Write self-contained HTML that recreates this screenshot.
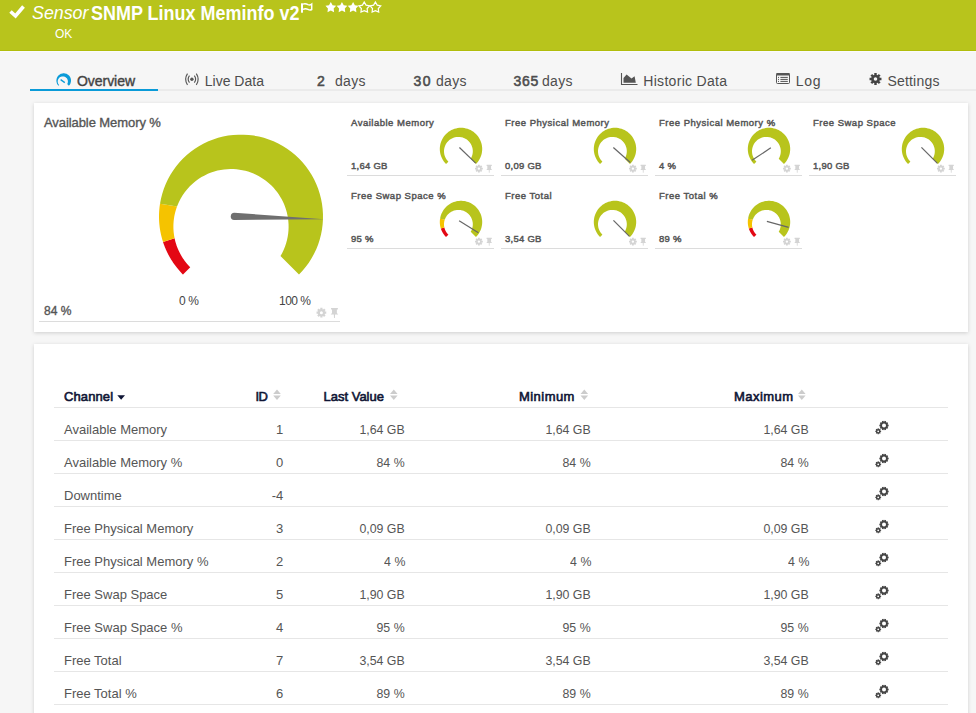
<!DOCTYPE html><html><head><meta charset="utf-8"><style>
html,body{margin:0;padding:0;}
body{width:976px;height:713px;overflow:hidden;position:relative;background:#f6f6f6;font-family:"Liberation Sans", sans-serif;}
.p{position:absolute;background:#fff;box-shadow:0 1px 4px rgba(0,0,0,0.16);}
.ln{position:absolute;height:1px;}
</style></head><body>
<div style="position:absolute;left:0;top:0;width:976px;height:50px;background:#b8c41c"></div>
<div style="position:absolute;left:0;top:50px;width:976px;height:1px;background:#b1bd0c"></div>
<div style="position:absolute;left:0;top:51px;width:976px;height:1px;background:#fafafc"></div>
<svg style="position:absolute;left:0;top:0" width="976" height="52"><path d="M10.5,11.5 L15.5,16 L23.5,6.5" stroke="#fff" stroke-width="3.6" fill="none" stroke-linecap="butt" stroke-linejoin="miter"/><rect x="301" y="3.3" width="2" height="9.4" fill="#fff"/><path d="M303,4.1 Q305.5,3.3 308,4.6 Q310,5.4 311.7,4.1 L311.7,9.5 Q310,10.6 308,9.4 Q305.5,8.2 303,9.4" stroke="#fff" stroke-width="1.5" fill="none"/></svg>
<div style="position:absolute;top:-4.95px;line-height:36px;font-size:18px;font-weight:400;color:#fff;white-space:nowrap;font-style:italic;left:32px;transform:scaleX(0.99);transform-origin:0 0;">Sensor</div>
<div style="position:absolute;top:-6.24px;line-height:39.0px;font-size:19.5px;font-weight:700;color:#fff;white-space:nowrap;left:90.6px;transform:scaleX(0.922);transform-origin:0 0;">SNMP Linux Meminfo v2</div>
<div style="position:absolute;top:22.03px;line-height:24px;font-size:12px;font-weight:400;color:#fff;white-space:nowrap;left:55px;">OK</div>
<svg style="position:absolute;left:0;top:0" width="400" height="20"><polygon points="330.80,2.00 332.58,5.15 336.13,5.87 333.68,8.53 334.09,12.13 330.80,10.62 327.51,12.13 327.92,8.53 325.47,5.87 329.02,5.15" fill="#fff"/><polygon points="341.95,2.00 343.73,5.15 347.28,5.87 344.83,8.53 345.24,12.13 341.95,10.62 338.66,12.13 339.07,8.53 336.62,5.87 340.17,5.15" fill="#fff"/><polygon points="353.10,2.00 354.88,5.15 358.43,5.87 355.98,8.53 356.39,12.13 353.10,10.62 349.81,12.13 350.22,8.53 347.77,5.87 351.32,5.15" fill="#fff"/><polygon points="364.25,2.00 366.03,5.15 369.58,5.87 367.13,8.53 367.54,12.13 364.25,10.62 360.96,12.13 361.37,8.53 358.92,5.87 362.47,5.15" fill="none" stroke="#fff" stroke-width="1.2"/><polygon points="375.40,2.00 377.18,5.15 380.73,5.87 378.28,8.53 378.69,12.13 375.40,10.62 372.11,12.13 372.52,8.53 370.07,5.87 373.62,5.15" fill="none" stroke="#fff" stroke-width="1.2"/></svg>
<div style="position:absolute;left:30px;top:89px;width:946px;height:2px;background:#ebebeb"></div>
<div style="position:absolute;left:30px;top:89px;width:128px;height:2px;background:#0a9bd8"></div>
<div style="position:absolute;top:67.37px;line-height:28px;font-size:14px;font-weight:400;color:#444;white-space:nowrap;letter-spacing:-0.05px;left:77px;-webkit-text-stroke:0.4px #444;">Overview</div>
<div style="position:absolute;top:67.37px;line-height:28px;font-size:14px;font-weight:400;color:#4d4d4d;white-space:nowrap;left:204.8px;">Live Data</div>
<div style="position:absolute;top:67.37px;line-height:28px;font-size:14px;font-weight:400;color:#4d4d4d;white-space:nowrap;left:317px;-webkit-text-stroke:0.55px #4d4d4d;">2</div>
<div style="position:absolute;top:67.37px;line-height:28px;font-size:14px;font-weight:400;color:#4d4d4d;white-space:nowrap;letter-spacing:0.3px;left:335px;">days</div>
<div style="position:absolute;top:67.37px;line-height:28px;font-size:14px;font-weight:400;color:#4d4d4d;white-space:nowrap;letter-spacing:1.4px;left:413.5px;-webkit-text-stroke:0.55px #4d4d4d;">30</div>
<div style="position:absolute;top:67.37px;line-height:28px;font-size:14px;font-weight:400;color:#4d4d4d;white-space:nowrap;letter-spacing:0.3px;left:436px;">days</div>
<div style="position:absolute;top:67.37px;line-height:28px;font-size:14px;font-weight:400;color:#4d4d4d;white-space:nowrap;letter-spacing:0.7px;left:513.5px;-webkit-text-stroke:0.55px #4d4d4d;">365</div>
<div style="position:absolute;top:67.37px;line-height:28px;font-size:14px;font-weight:400;color:#4d4d4d;white-space:nowrap;letter-spacing:0.3px;left:542px;">days</div>
<div style="position:absolute;top:67.37px;line-height:28px;font-size:14px;font-weight:400;color:#4d4d4d;white-space:nowrap;letter-spacing:0.3px;left:643.3px;">Historic Data</div>
<div style="position:absolute;top:67.37px;line-height:28px;font-size:14px;font-weight:400;color:#4d4d4d;white-space:nowrap;letter-spacing:0.7px;left:795.8px;">Log</div>
<div style="position:absolute;top:67.37px;line-height:28px;font-size:14px;font-weight:400;color:#4d4d4d;white-space:nowrap;letter-spacing:0.2px;left:887.4px;">Settings</div>
<svg style="position:absolute;left:0;top:0" width="976" height="100"><path d="M58.54,85.76 L58.15,85.34 L57.79,84.89 L57.48,84.41 L57.20,83.91 L56.96,83.39 L56.76,82.86 L56.60,82.30 L56.49,81.74 L56.42,81.17 L56.40,80.60 L56.42,80.03 L56.49,79.46 L56.60,78.90 L56.76,78.34 L56.96,77.81 L57.20,77.29 L57.48,76.79 L57.79,76.31 L58.15,75.86 L58.54,75.44 L58.96,75.05 L59.41,74.69 L59.89,74.38 L60.39,74.10 L60.91,73.86 L61.44,73.66 L62.00,73.50 L62.56,73.39 L63.13,73.32 L63.70,73.30 L64.27,73.32 L64.84,73.39 L65.40,73.50 L65.96,73.66 L66.49,73.86 L67.01,74.10 L67.51,74.38 L67.99,74.69 L68.44,75.05 L68.86,75.44 L69.25,75.86 L69.61,76.31 L69.92,76.79 L70.20,77.29 L70.44,77.81 L70.64,78.34 L70.80,78.90 L70.91,79.46 L70.98,80.03 L71.00,80.60 L70.98,81.17 L70.91,81.74 L70.80,82.30 L70.64,82.86 L70.44,83.39 L70.20,83.91 L69.92,84.41 L69.61,84.89 L69.25,85.34 L68.86,85.76 L67.19,84.09 L67.38,83.74 L67.54,83.39 L67.67,83.03 L67.76,82.67 L67.83,82.31 L67.88,81.96 L67.90,81.61 L67.89,81.26 L67.87,80.93 L67.82,80.60 L67.75,80.28 L67.67,79.97 L67.56,79.67 L67.44,79.38 L67.30,79.11 L67.15,78.84 L66.99,78.59 L66.81,78.34 L66.61,78.11 L66.41,77.89 L66.19,77.69 L65.96,77.49 L65.71,77.31 L65.46,77.15 L65.19,77.00 L64.92,76.86 L64.63,76.74 L64.33,76.63 L64.02,76.55 L63.70,76.48 L63.37,76.43 L63.04,76.41 L62.69,76.40 L62.34,76.42 L61.99,76.47 L61.63,76.54 L61.27,76.63 L60.91,76.76 L60.56,76.92 L60.21,77.11 L59.87,77.33 L59.54,77.58 L59.23,77.86 L58.94,78.17 L58.67,78.51 L58.42,78.88 L58.21,79.28 L58.03,79.70 L57.88,80.14 L57.78,80.60 L57.72,81.07 L57.70,81.55 L57.73,82.03 L57.80,82.52 L57.92,82.99 L58.09,83.46 L58.30,83.91 L58.56,84.33 L58.86,84.74 L59.19,85.11Z" fill="#0a9bd8"/><line x1="60.6" y1="79.6" x2="64.8" y2="82.6" stroke="#0a9bd8" stroke-width="1.3"/><circle cx="191.9" cy="79.2" r="1.7" fill="#555"/><path d="M189.48,82.72 A5.85,5.85 0 0,1 189.48,75.68 M194.32,75.68 A5.85,5.85 0 0,1 194.32,82.72" stroke="#555" stroke-width="1.15" fill="none"/><path d="M187.50,84.84 A10.2,10.2 0 0,1 187.50,73.56 M196.30,73.56 A10.2,10.2 0 0,1 196.30,84.84" stroke="#555" stroke-width="1.15" fill="none"/><path d="M621.5,73 L621.5,84.5 L637.5,84.5" stroke="#555" stroke-width="1.1" fill="none"/><path d="M623.5,82.8 L623.5,78 L626.6,74.6 L631.5,78.6 L634.6,76.2 L635.8,82.8 Z" fill="#555"/><rect x="776.5" y="73.5" width="13" height="10" rx="1" fill="none" stroke="#555" stroke-width="1"/><rect x="776.5" y="73" width="13" height="2.5" fill="#555"/><rect x="778" y="76.9" width="1" height="1" fill="#555"/><rect x="780.4" y="76.9" width="7.4" height="1" fill="#555"/><rect x="778" y="78.9" width="1" height="1" fill="#555"/><rect x="780.4" y="78.9" width="7.4" height="1" fill="#555"/><rect x="778" y="80.9" width="1" height="1" fill="#555"/><rect x="780.4" y="80.9" width="7.4" height="1" fill="#555"/><path d="M879.57,77.32 L879.75,77.86 L881.47,77.73 L881.47,80.27 L879.75,80.14 L879.57,80.68 L879.31,81.20 L880.62,82.32 L878.82,84.12 L877.70,82.81 L877.18,83.07 L876.64,83.25 L876.77,84.97 L874.23,84.97 L874.36,83.25 L873.82,83.07 L873.30,82.81 L872.18,84.12 L870.38,82.32 L871.69,81.20 L871.43,80.68 L871.25,80.14 L869.53,80.27 L869.53,77.73 L871.25,77.86 L871.43,77.32 L871.69,76.80 L870.38,75.68 L872.18,73.88 L873.30,75.19 L873.82,74.93 L874.36,74.75 L874.23,73.03 L876.77,73.03 L876.64,74.75 L877.18,74.93 L877.70,75.19 L878.82,73.88 L880.62,75.68 L879.31,76.80Z M877.30,79.00 A1.8,1.8 0 1,0 873.70,79.00 A1.8,1.8 0 1,0 877.30,79.00Z" fill="#444" fill-rule="evenodd"/></svg>
<div class="p" style="left:34px;top:103px;width:934px;height:229px"></div>
<div style="position:absolute;top:110.20px;line-height:26px;font-size:13px;font-weight:400;color:#555;white-space:nowrap;letter-spacing:-0.08px;left:44px;-webkit-text-stroke:0.35px #555;">Available Memory %</div>
<div style="position:absolute;top:299.03px;line-height:24px;font-size:12px;font-weight:400;color:#555;white-space:nowrap;left:44px;-webkit-text-stroke:0.35px #555;">84 %</div>
<div style="position:absolute;top:289.03px;line-height:24px;font-size:12px;font-weight:400;color:#444;white-space:nowrap;letter-spacing:-0.4px;left:179px;">0 %</div>
<div style="position:absolute;top:289.03px;line-height:24px;font-size:12px;font-weight:400;color:#444;white-space:nowrap;letter-spacing:-0.5px;left:279px;">100 %</div>
<div class="ln" style="left:39px;top:321px;width:301px;background:#dcdcdc"></div>
<svg style="position:absolute;left:0;top:0" width="976" height="340"><path d="M183.02,274.58 L182.56,274.13 L182.11,273.66 L181.67,273.20 L181.22,272.73 L180.79,272.26 L180.35,271.79 L179.92,271.31 L179.49,270.83 L179.07,270.34 L178.65,269.85 L178.23,269.36 L177.82,268.87 L177.41,268.37 L177.00,267.87 L176.60,267.37 L176.21,266.86 L175.81,266.35 L175.43,265.83 L175.04,265.32 L174.66,264.80 L174.28,264.28 L173.91,263.75 L173.54,263.22 L173.18,262.69 L172.82,262.16 L172.46,261.62 L172.11,261.08 L171.77,260.54 L171.42,259.99 L171.08,259.44 L170.75,258.89 L170.42,258.34 L170.09,257.79 L169.77,257.23 L169.46,256.67 L169.14,256.10 L168.83,255.54 L168.53,254.97 L168.23,254.40 L167.94,253.83 L167.65,253.25 L167.36,252.68 L167.08,252.10 L166.80,251.51 L166.53,250.93 L166.26,250.34 L166.00,249.76 L165.74,249.17 L165.49,248.57 L165.24,247.98 L165.00,247.38 L164.76,246.79 L164.52,246.19 L164.29,245.58 L164.07,244.98 L163.85,244.38 L163.63,243.77 L163.42,243.16 L163.21,242.55 L163.01,241.94 L174.58,238.18 L174.69,238.72 L174.81,239.26 L174.93,239.80 L175.06,240.34 L175.20,240.88 L175.34,241.41 L175.48,241.95 L175.63,242.48 L175.79,243.01 L175.95,243.55 L176.11,244.08 L176.29,244.60 L176.46,245.13 L176.64,245.66 L176.83,246.18 L177.02,246.71 L177.22,247.23 L177.42,247.75 L177.63,248.26 L177.84,248.78 L178.06,249.29 L178.28,249.81 L178.51,250.32 L178.74,250.83 L178.98,251.33 L179.22,251.84 L179.47,252.34 L179.72,252.84 L179.98,253.34 L180.24,253.83 L180.51,254.32 L180.78,254.81 L181.06,255.30 L181.34,255.79 L181.63,256.27 L181.92,256.75 L182.22,257.23 L182.52,257.70 L182.82,258.17 L183.13,258.64 L183.45,259.11 L183.77,259.57 L184.09,260.03 L184.42,260.49 L184.76,260.94 L185.09,261.39 L185.44,261.84 L185.78,262.28 L186.13,262.72 L186.49,263.16 L186.85,263.59 L187.21,264.02 L187.58,264.45 L187.95,264.87 L188.33,265.29 L188.71,265.70 L189.09,266.12 L189.48,266.52 L189.87,266.93 L190.27,267.33Z" fill="#e30814"/><path d="M163.01,241.94 L162.82,241.33 L162.62,240.71 L162.44,240.10 L162.26,239.48 L162.08,238.86 L161.91,238.24 L161.74,237.62 L161.58,236.99 L161.42,236.37 L161.27,235.74 L161.12,235.12 L160.97,234.49 L160.84,233.86 L160.70,233.23 L160.58,232.60 L160.45,231.97 L160.33,231.33 L160.22,230.70 L160.11,230.06 L160.01,229.43 L159.91,228.79 L159.82,228.15 L159.73,227.52 L159.65,226.88 L159.57,226.24 L159.50,225.60 L159.43,224.96 L159.36,224.32 L159.31,223.68 L159.25,223.03 L159.20,222.39 L159.16,221.75 L159.12,221.11 L159.09,220.46 L159.06,219.82 L159.04,219.18 L159.02,218.53 L159.01,217.89 L159.00,217.24 L159.00,216.60 L159.00,215.96 L159.01,215.31 L159.02,214.67 L159.04,214.02 L159.06,213.38 L159.09,212.74 L159.12,212.09 L159.16,211.45 L159.20,210.81 L159.25,210.17 L159.31,209.52 L159.36,208.88 L159.43,208.24 L159.50,207.60 L159.57,206.96 L159.65,206.32 L159.73,205.68 L159.82,205.05 L159.91,204.41 L160.01,203.77 L177.03,206.47 L176.85,206.96 L176.68,207.45 L176.51,207.94 L176.34,208.43 L176.18,208.93 L176.02,209.43 L175.87,209.93 L175.72,210.43 L175.57,210.93 L175.43,211.44 L175.29,211.95 L175.16,212.46 L175.04,212.97 L174.91,213.48 L174.80,214.00 L174.68,214.52 L174.57,215.03 L174.47,215.55 L174.37,216.08 L174.27,216.60 L174.18,217.12 L174.10,217.65 L174.02,218.18 L173.94,218.71 L173.87,219.24 L173.81,219.77 L173.75,220.30 L173.69,220.83 L173.64,221.37 L173.59,221.91 L173.55,222.44 L173.51,222.98 L173.48,223.52 L173.46,224.06 L173.43,224.60 L173.42,225.14 L173.41,225.68 L173.40,226.22 L173.40,226.76 L173.40,227.31 L173.41,227.85 L173.43,228.39 L173.45,228.94 L173.47,229.48 L173.50,230.03 L173.54,230.57 L173.58,231.12 L173.62,231.66 L173.67,232.21 L173.73,232.75 L173.79,233.29 L173.86,233.84 L173.93,234.38 L174.01,234.93 L174.09,235.47 L174.17,236.01 L174.27,236.56 L174.37,237.10 L174.47,237.64 L174.58,238.18Z" fill="#f5c300"/><path d="M160.01,203.77 L160.97,198.71 L162.26,193.72 L163.85,188.82 L165.74,184.03 L167.94,179.37 L170.42,174.86 L173.18,170.51 L176.21,166.34 L179.49,162.37 L183.02,158.62 L186.77,155.09 L190.74,151.81 L194.91,148.78 L199.26,146.02 L203.77,143.54 L208.43,141.34 L213.22,139.45 L218.12,137.86 L223.11,136.57 L228.17,135.61 L233.28,134.96 L238.42,134.64 L243.58,134.64 L248.72,134.96 L253.83,135.61 L258.89,136.57 L263.88,137.86 L268.78,139.45 L273.57,141.34 L278.23,143.54 L282.74,146.02 L287.09,148.78 L291.26,151.81 L295.23,155.09 L298.98,158.62 L302.51,162.37 L305.79,166.34 L308.82,170.51 L311.58,174.86 L314.06,179.37 L316.26,184.03 L318.15,188.82 L319.74,193.72 L321.03,198.71 L321.99,203.77 L322.64,208.88 L322.96,214.02 L322.96,219.18 L322.64,224.32 L321.99,229.43 L321.03,234.49 L319.74,239.48 L318.15,244.38 L316.26,249.17 L314.06,253.83 L311.58,258.34 L308.82,262.69 L305.79,266.86 L302.51,270.83 L298.98,274.58 L280.48,256.08 L282.22,252.94 L283.74,249.75 L285.04,246.53 L286.13,243.29 L287.01,240.04 L287.69,236.80 L288.18,233.58 L288.47,230.39 L288.60,227.24 L288.55,224.13 L288.33,221.07 L287.97,218.08 L287.45,215.14 L286.79,212.27 L285.99,209.47 L285.07,206.75 L284.02,204.10 L282.86,201.53 L281.58,199.04 L280.19,196.63 L278.70,194.31 L277.10,192.07 L275.41,189.91 L273.61,187.85 L271.73,185.87 L269.75,183.99 L267.69,182.19 L265.53,180.50 L263.29,178.90 L260.97,177.41 L258.56,176.02 L256.07,174.74 L253.50,173.58 L250.85,172.53 L248.13,171.61 L245.33,170.81 L242.46,170.15 L239.52,169.63 L236.53,169.27 L233.47,169.05 L230.36,169.00 L227.21,169.13 L224.02,169.42 L220.80,169.91 L217.56,170.59 L214.31,171.47 L211.07,172.56 L207.85,173.86 L204.66,175.38 L201.52,177.12 L198.44,179.08 L195.46,181.27 L192.57,183.69 L189.82,186.33 L187.20,189.19 L184.76,192.26 L182.49,195.54 L180.44,199.01 L178.61,202.65 L177.03,206.47Z" fill="#b8c41c"/><path d="M234.09,219.98 L323.96,219.21 L234.32,212.79 A3.6,3.6 0 0,0 234.09,219.98Z" fill="#6f6f6f"/><path d="M324.82,311.28 L324.94,311.62 L326.27,311.58 L326.27,313.82 L324.94,313.78 L324.82,314.12 L324.67,314.44 L325.64,315.35 L324.05,316.94 L323.14,315.97 L322.82,316.12 L322.48,316.24 L322.52,317.57 L320.28,317.57 L320.32,316.24 L319.98,316.12 L319.66,315.97 L318.75,316.94 L317.16,315.35 L318.13,314.44 L317.98,314.12 L317.86,313.78 L316.53,313.82 L316.53,311.58 L317.86,311.62 L317.98,311.28 L318.13,310.96 L317.16,310.05 L318.75,308.46 L319.66,309.43 L319.98,309.28 L320.32,309.16 L320.28,307.83 L322.52,307.83 L322.48,309.16 L322.82,309.28 L323.14,309.43 L324.05,308.46 L325.64,310.05 L324.67,310.96Z M322.90,312.70 A1.5,1.5 0 1,0 319.90,312.70 A1.5,1.5 0 1,0 322.90,312.70Z" fill="#d4d4d4" fill-rule="evenodd"/><path d="M331.03,308.09 L337.87,308.09 L337.87,309.47 L336.88,309.47 L336.88,312.99 L338.25,314.56 L335.06,314.56 L334.91,317.89 L333.99,317.89 L333.84,314.56 L330.65,314.56 L332.02,312.99 L332.02,309.47 L331.03,309.47Z" fill="#d4d4d4"/><path d="M446.01,163.99 L444.88,162.77 L443.85,161.46 L442.92,160.08 L442.11,158.62 L441.41,157.11 L440.84,155.55 L440.39,153.95 L440.06,152.32 L439.87,150.66 L439.80,149.00 L439.87,147.34 L440.06,145.68 L440.39,144.05 L440.84,142.45 L441.41,140.89 L442.11,139.38 L442.92,137.92 L443.85,136.54 L444.88,135.23 L446.01,134.01 L447.23,132.88 L448.54,131.85 L449.92,130.92 L451.38,130.11 L452.89,129.41 L454.45,128.84 L456.05,128.39 L457.68,128.06 L459.34,127.87 L461.00,127.80 L462.66,127.87 L464.32,128.06 L465.95,128.39 L467.55,128.84 L469.11,129.41 L470.62,130.11 L472.08,130.92 L473.46,131.85 L474.77,132.88 L475.99,134.01 L477.12,135.23 L478.15,136.54 L479.08,137.92 L479.89,139.38 L480.59,140.89 L481.16,142.45 L481.61,144.05 L481.94,145.68 L482.13,147.34 L482.20,149.00 L482.13,150.66 L481.94,152.32 L481.61,153.95 L481.16,155.55 L480.59,157.11 L479.89,158.62 L479.08,160.08 L478.15,161.46 L477.12,162.77 L475.99,163.99 L470.73,158.73 L471.27,157.77 L471.71,156.78 L472.08,155.79 L472.37,154.79 L472.58,153.80 L472.72,152.81 L472.79,151.83 L472.79,150.87 L472.73,149.92 L472.62,149.00 L472.44,148.10 L472.21,147.22 L471.93,146.38 L471.60,145.55 L471.23,144.76 L470.81,144.00 L470.35,143.27 L469.85,142.57 L469.31,141.90 L468.73,141.27 L468.11,140.67 L467.46,140.11 L466.77,139.58 L466.05,139.10 L465.29,138.65 L464.49,138.25 L463.67,137.90 L462.81,137.59 L461.92,137.34 L461.00,137.14 L460.06,137.00 L459.09,136.92 L458.10,136.90 L457.09,136.96 L456.07,137.09 L455.04,137.30 L454.01,137.59 L452.98,137.96 L451.96,138.42 L450.97,138.97 L450.00,139.60 L449.07,140.33 L448.19,141.15 L447.36,142.05 L446.61,143.04 L445.93,144.10 L445.34,145.24 L444.84,146.44 L444.46,147.70 L444.18,149.00 L444.03,150.34 L444.01,151.69 L444.11,153.06 L444.34,154.41 L444.70,155.75 L445.20,157.05 L445.82,158.30 L446.56,159.49 L447.41,160.61 L448.37,161.63Z" fill="#b8c41c"/><line x1="459.42" y1="147.47" x2="475.67" y2="163.17" stroke="#666" stroke-width="1.2"/><path d="M481.63,167.47 L481.73,167.73 L482.80,167.70 L482.80,169.50 L481.73,169.47 L481.63,169.73 L481.51,169.99 L482.29,170.72 L481.02,171.99 L480.29,171.21 L480.03,171.33 L479.77,171.43 L479.80,172.50 L478.00,172.50 L478.03,171.43 L477.77,171.33 L477.51,171.21 L476.78,171.99 L475.51,170.72 L476.29,169.99 L476.17,169.73 L476.07,169.47 L475.00,169.50 L475.00,167.70 L476.07,167.73 L476.17,167.47 L476.29,167.21 L475.51,166.48 L476.78,165.21 L477.51,165.99 L477.77,165.87 L478.03,165.77 L478.00,164.70 L479.80,164.70 L479.77,165.77 L480.03,165.87 L480.29,165.99 L481.02,165.21 L482.29,166.48 L481.51,167.21Z M480.10,168.60 A1.2,1.2 0 1,0 477.70,168.60 A1.2,1.2 0 1,0 480.10,168.60Z" fill="#d4d4d4" fill-rule="evenodd"/><path d="M486.59,164.84 L491.81,164.84 L491.81,165.96 L491.06,165.96 L491.06,168.84 L492.10,170.12 L489.66,170.12 L489.55,172.84 L488.85,172.84 L488.74,170.12 L486.30,170.12 L487.34,168.84 L487.34,165.96 L486.59,165.96Z" fill="#d4d4d4"/><path d="M600.01,163.99 L598.88,162.77 L597.85,161.46 L596.92,160.08 L596.11,158.62 L595.41,157.11 L594.84,155.55 L594.39,153.95 L594.06,152.32 L593.87,150.66 L593.80,149.00 L593.87,147.34 L594.06,145.68 L594.39,144.05 L594.84,142.45 L595.41,140.89 L596.11,139.38 L596.92,137.92 L597.85,136.54 L598.88,135.23 L600.01,134.01 L601.23,132.88 L602.54,131.85 L603.92,130.92 L605.38,130.11 L606.89,129.41 L608.45,128.84 L610.05,128.39 L611.68,128.06 L613.34,127.87 L615.00,127.80 L616.66,127.87 L618.32,128.06 L619.95,128.39 L621.55,128.84 L623.11,129.41 L624.62,130.11 L626.08,130.92 L627.46,131.85 L628.77,132.88 L629.99,134.01 L631.12,135.23 L632.15,136.54 L633.08,137.92 L633.89,139.38 L634.59,140.89 L635.16,142.45 L635.61,144.05 L635.94,145.68 L636.13,147.34 L636.20,149.00 L636.13,150.66 L635.94,152.32 L635.61,153.95 L635.16,155.55 L634.59,157.11 L633.89,158.62 L633.08,160.08 L632.15,161.46 L631.12,162.77 L629.99,163.99 L624.73,158.73 L625.27,157.77 L625.71,156.78 L626.08,155.79 L626.37,154.79 L626.58,153.80 L626.72,152.81 L626.79,151.83 L626.79,150.87 L626.73,149.92 L626.62,149.00 L626.44,148.10 L626.21,147.22 L625.93,146.38 L625.60,145.55 L625.23,144.76 L624.81,144.00 L624.35,143.27 L623.85,142.57 L623.31,141.90 L622.73,141.27 L622.11,140.67 L621.46,140.11 L620.77,139.58 L620.05,139.10 L619.29,138.65 L618.49,138.25 L617.67,137.90 L616.81,137.59 L615.92,137.34 L615.00,137.14 L614.06,137.00 L613.09,136.92 L612.10,136.90 L611.09,136.96 L610.07,137.09 L609.04,137.30 L608.01,137.59 L606.98,137.96 L605.96,138.42 L604.97,138.97 L604.00,139.60 L603.07,140.33 L602.19,141.15 L601.36,142.05 L600.61,143.04 L599.93,144.10 L599.34,145.24 L598.84,146.44 L598.46,147.70 L598.18,149.00 L598.03,150.34 L598.01,151.69 L598.11,153.06 L598.34,154.41 L598.70,155.75 L599.20,157.05 L599.82,158.30 L600.56,159.49 L601.41,160.61 L602.37,161.63Z" fill="#b8c41c"/><line x1="613.35" y1="147.54" x2="630.28" y2="162.52" stroke="#666" stroke-width="1.2"/><path d="M635.63,167.47 L635.73,167.73 L636.80,167.70 L636.80,169.50 L635.73,169.47 L635.63,169.73 L635.51,169.99 L636.29,170.72 L635.02,171.99 L634.29,171.21 L634.03,171.33 L633.77,171.43 L633.80,172.50 L632.00,172.50 L632.03,171.43 L631.77,171.33 L631.51,171.21 L630.78,171.99 L629.51,170.72 L630.29,169.99 L630.17,169.73 L630.07,169.47 L629.00,169.50 L629.00,167.70 L630.07,167.73 L630.17,167.47 L630.29,167.21 L629.51,166.48 L630.78,165.21 L631.51,165.99 L631.77,165.87 L632.03,165.77 L632.00,164.70 L633.80,164.70 L633.77,165.77 L634.03,165.87 L634.29,165.99 L635.02,165.21 L636.29,166.48 L635.51,167.21Z M634.10,168.60 A1.2,1.2 0 1,0 631.70,168.60 A1.2,1.2 0 1,0 634.10,168.60Z" fill="#d4d4d4" fill-rule="evenodd"/><path d="M640.59,164.84 L645.81,164.84 L645.81,165.96 L645.06,165.96 L645.06,168.84 L646.10,170.12 L643.66,170.12 L643.55,172.84 L642.85,172.84 L642.74,170.12 L640.30,170.12 L641.34,168.84 L641.34,165.96 L640.59,165.96Z" fill="#d4d4d4"/><path d="M754.01,163.99 L752.88,162.77 L751.85,161.46 L750.92,160.08 L750.11,158.62 L749.41,157.11 L748.84,155.55 L748.39,153.95 L748.06,152.32 L747.87,150.66 L747.80,149.00 L747.87,147.34 L748.06,145.68 L748.39,144.05 L748.84,142.45 L749.41,140.89 L750.11,139.38 L750.92,137.92 L751.85,136.54 L752.88,135.23 L754.01,134.01 L755.23,132.88 L756.54,131.85 L757.92,130.92 L759.38,130.11 L760.89,129.41 L762.45,128.84 L764.05,128.39 L765.68,128.06 L767.34,127.87 L769.00,127.80 L770.66,127.87 L772.32,128.06 L773.95,128.39 L775.55,128.84 L777.11,129.41 L778.62,130.11 L780.08,130.92 L781.46,131.85 L782.77,132.88 L783.99,134.01 L785.12,135.23 L786.15,136.54 L787.08,137.92 L787.89,139.38 L788.59,140.89 L789.16,142.45 L789.61,144.05 L789.94,145.68 L790.13,147.34 L790.20,149.00 L790.13,150.66 L789.94,152.32 L789.61,153.95 L789.16,155.55 L788.59,157.11 L787.89,158.62 L787.08,160.08 L786.15,161.46 L785.12,162.77 L783.99,163.99 L778.73,158.73 L779.27,157.77 L779.71,156.78 L780.08,155.79 L780.37,154.79 L780.58,153.80 L780.72,152.81 L780.79,151.83 L780.79,150.87 L780.73,149.92 L780.62,149.00 L780.44,148.10 L780.21,147.22 L779.93,146.38 L779.60,145.55 L779.23,144.76 L778.81,144.00 L778.35,143.27 L777.85,142.57 L777.31,141.90 L776.73,141.27 L776.11,140.67 L775.46,140.11 L774.77,139.58 L774.05,139.10 L773.29,138.65 L772.49,138.25 L771.67,137.90 L770.81,137.59 L769.92,137.34 L769.00,137.14 L768.06,137.00 L767.09,136.92 L766.10,136.90 L765.09,136.96 L764.07,137.09 L763.04,137.30 L762.01,137.59 L760.98,137.96 L759.96,138.42 L758.97,138.97 L758.00,139.60 L757.07,140.33 L756.19,141.15 L755.36,142.05 L754.61,143.04 L753.93,144.10 L753.34,145.24 L752.84,146.44 L752.46,147.70 L752.18,149.00 L752.03,150.34 L752.01,151.69 L752.11,153.06 L752.34,154.41 L752.70,155.75 L753.20,157.05 L753.82,158.30 L754.56,159.49 L755.41,160.61 L756.37,161.63Z" fill="#b8c41c"/><line x1="770.83" y1="147.78" x2="752.05" y2="160.35" stroke="#666" stroke-width="1.2"/><path d="M789.63,167.47 L789.73,167.73 L790.80,167.70 L790.80,169.50 L789.73,169.47 L789.63,169.73 L789.51,169.99 L790.29,170.72 L789.02,171.99 L788.29,171.21 L788.03,171.33 L787.77,171.43 L787.80,172.50 L786.00,172.50 L786.03,171.43 L785.77,171.33 L785.51,171.21 L784.78,171.99 L783.51,170.72 L784.29,169.99 L784.17,169.73 L784.07,169.47 L783.00,169.50 L783.00,167.70 L784.07,167.73 L784.17,167.47 L784.29,167.21 L783.51,166.48 L784.78,165.21 L785.51,165.99 L785.77,165.87 L786.03,165.77 L786.00,164.70 L787.80,164.70 L787.77,165.77 L788.03,165.87 L788.29,165.99 L789.02,165.21 L790.29,166.48 L789.51,167.21Z M788.10,168.60 A1.2,1.2 0 1,0 785.70,168.60 A1.2,1.2 0 1,0 788.10,168.60Z" fill="#d4d4d4" fill-rule="evenodd"/><path d="M794.59,164.84 L799.81,164.84 L799.81,165.96 L799.06,165.96 L799.06,168.84 L800.10,170.12 L797.66,170.12 L797.55,172.84 L796.85,172.84 L796.74,170.12 L794.30,170.12 L795.34,168.84 L795.34,165.96 L794.59,165.96Z" fill="#d4d4d4"/><path d="M908.01,163.99 L906.88,162.77 L905.85,161.46 L904.92,160.08 L904.11,158.62 L903.41,157.11 L902.84,155.55 L902.39,153.95 L902.06,152.32 L901.87,150.66 L901.80,149.00 L901.87,147.34 L902.06,145.68 L902.39,144.05 L902.84,142.45 L903.41,140.89 L904.11,139.38 L904.92,137.92 L905.85,136.54 L906.88,135.23 L908.01,134.01 L909.23,132.88 L910.54,131.85 L911.92,130.92 L913.38,130.11 L914.89,129.41 L916.45,128.84 L918.05,128.39 L919.68,128.06 L921.34,127.87 L923.00,127.80 L924.66,127.87 L926.32,128.06 L927.95,128.39 L929.55,128.84 L931.11,129.41 L932.62,130.11 L934.08,130.92 L935.46,131.85 L936.77,132.88 L937.99,134.01 L939.12,135.23 L940.15,136.54 L941.08,137.92 L941.89,139.38 L942.59,140.89 L943.16,142.45 L943.61,144.05 L943.94,145.68 L944.13,147.34 L944.20,149.00 L944.13,150.66 L943.94,152.32 L943.61,153.95 L943.16,155.55 L942.59,157.11 L941.89,158.62 L941.08,160.08 L940.15,161.46 L939.12,162.77 L937.99,163.99 L932.73,158.73 L933.27,157.77 L933.71,156.78 L934.08,155.79 L934.37,154.79 L934.58,153.80 L934.72,152.81 L934.79,151.83 L934.79,150.87 L934.73,149.92 L934.62,149.00 L934.44,148.10 L934.21,147.22 L933.93,146.38 L933.60,145.55 L933.23,144.76 L932.81,144.00 L932.35,143.27 L931.85,142.57 L931.31,141.90 L930.73,141.27 L930.11,140.67 L929.46,140.11 L928.77,139.58 L928.05,139.10 L927.29,138.65 L926.49,138.25 L925.67,137.90 L924.81,137.59 L923.92,137.34 L923.00,137.14 L922.06,137.00 L921.09,136.92 L920.10,136.90 L919.09,136.96 L918.07,137.09 L917.04,137.30 L916.01,137.59 L914.98,137.96 L913.96,138.42 L912.97,138.97 L912.00,139.60 L911.07,140.33 L910.19,141.15 L909.36,142.05 L908.61,143.04 L907.93,144.10 L907.34,145.24 L906.84,146.44 L906.46,147.70 L906.18,149.00 L906.03,150.34 L906.01,151.69 L906.11,153.06 L906.34,154.41 L906.70,155.75 L907.20,157.05 L907.82,158.30 L908.56,159.49 L909.41,160.61 L910.37,161.63Z" fill="#b8c41c"/><line x1="921.44" y1="147.44" x2="937.42" y2="163.42" stroke="#666" stroke-width="1.2"/><path d="M943.63,167.47 L943.73,167.73 L944.80,167.70 L944.80,169.50 L943.73,169.47 L943.63,169.73 L943.51,169.99 L944.29,170.72 L943.02,171.99 L942.29,171.21 L942.03,171.33 L941.77,171.43 L941.80,172.50 L940.00,172.50 L940.03,171.43 L939.77,171.33 L939.51,171.21 L938.78,171.99 L937.51,170.72 L938.29,169.99 L938.17,169.73 L938.07,169.47 L937.00,169.50 L937.00,167.70 L938.07,167.73 L938.17,167.47 L938.29,167.21 L937.51,166.48 L938.78,165.21 L939.51,165.99 L939.77,165.87 L940.03,165.77 L940.00,164.70 L941.80,164.70 L941.77,165.77 L942.03,165.87 L942.29,165.99 L943.02,165.21 L944.29,166.48 L943.51,167.21Z M942.10,168.60 A1.2,1.2 0 1,0 939.70,168.60 A1.2,1.2 0 1,0 942.10,168.60Z" fill="#d4d4d4" fill-rule="evenodd"/><path d="M948.59,164.84 L953.81,164.84 L953.81,165.96 L953.06,165.96 L953.06,168.84 L954.10,170.12 L951.66,170.12 L951.55,172.84 L950.85,172.84 L950.74,170.12 L948.30,170.12 L949.34,168.84 L949.34,165.96 L948.59,165.96Z" fill="#d4d4d4"/><path d="M446.01,236.99 L445.89,236.87 L445.78,236.75 L445.66,236.63 L445.55,236.51 L445.43,236.39 L445.32,236.27 L445.21,236.14 L445.10,236.02 L444.99,235.89 L444.88,235.77 L444.77,235.64 L444.67,235.51 L444.56,235.38 L444.45,235.26 L444.35,235.12 L444.25,234.99 L444.15,234.86 L444.05,234.73 L443.95,234.60 L443.85,234.46 L443.75,234.33 L443.66,234.19 L443.56,234.05 L443.47,233.92 L443.37,233.78 L443.28,233.64 L443.19,233.50 L443.10,233.36 L443.01,233.22 L442.92,233.08 L442.84,232.93 L442.75,232.79 L442.67,232.65 L442.59,232.50 L442.50,232.36 L442.42,232.21 L442.34,232.07 L442.26,231.92 L442.19,231.77 L442.11,231.62 L442.04,231.48 L441.96,231.33 L441.89,231.18 L441.82,231.03 L441.75,230.88 L441.68,230.72 L441.61,230.57 L441.54,230.42 L441.48,230.27 L441.41,230.11 L441.35,229.96 L441.29,229.80 L441.23,229.65 L441.17,229.49 L441.11,229.34 L441.05,229.18 L441.00,229.02 L440.94,228.87 L440.89,228.71 L440.84,228.55 L444.34,227.41 L444.37,227.55 L444.40,227.68 L444.44,227.82 L444.47,227.95 L444.51,228.08 L444.54,228.22 L444.58,228.35 L444.62,228.48 L444.66,228.62 L444.70,228.75 L444.75,228.88 L444.79,229.01 L444.84,229.14 L444.89,229.28 L444.94,229.41 L444.99,229.54 L445.04,229.67 L445.09,229.79 L445.14,229.92 L445.20,230.05 L445.25,230.18 L445.31,230.31 L445.37,230.43 L445.43,230.56 L445.49,230.68 L445.56,230.81 L445.62,230.93 L445.68,231.06 L445.75,231.18 L445.82,231.30 L445.89,231.43 L445.96,231.55 L446.03,231.67 L446.10,231.79 L446.17,231.91 L446.25,232.03 L446.32,232.14 L446.40,232.26 L446.48,232.38 L446.56,232.49 L446.64,232.61 L446.72,232.72 L446.80,232.84 L446.89,232.95 L446.97,233.06 L447.06,233.17 L447.14,233.28 L447.23,233.39 L447.32,233.50 L447.41,233.61 L447.50,233.71 L447.59,233.82 L447.69,233.92 L447.78,234.03 L447.88,234.13 L447.97,234.23 L448.07,234.33 L448.17,234.43 L448.27,234.53 L448.37,234.63Z" fill="#e30814"/><path d="M440.84,228.55 L440.79,228.39 L440.74,228.23 L440.69,228.07 L440.64,227.91 L440.60,227.75 L440.55,227.59 L440.51,227.43 L440.47,227.27 L440.43,227.11 L440.39,226.95 L440.35,226.79 L440.31,226.62 L440.27,226.46 L440.24,226.30 L440.21,226.14 L440.18,225.97 L440.14,225.81 L440.12,225.64 L440.09,225.48 L440.06,225.32 L440.04,225.15 L440.01,224.99 L439.99,224.82 L439.97,224.66 L439.95,224.49 L439.93,224.33 L439.91,224.16 L439.89,224.00 L439.88,223.83 L439.87,223.66 L439.85,223.50 L439.84,223.33 L439.83,223.16 L439.82,223.00 L439.82,222.83 L439.81,222.67 L439.81,222.50 L439.80,222.33 L439.80,222.17 L439.80,222.00 L439.80,221.83 L439.80,221.67 L439.81,221.50 L439.81,221.33 L439.82,221.17 L439.82,221.00 L439.83,220.84 L439.84,220.67 L439.85,220.50 L439.87,220.34 L439.88,220.17 L439.89,220.00 L439.91,219.84 L439.93,219.67 L439.95,219.51 L439.97,219.34 L439.99,219.18 L440.01,219.01 L440.04,218.85 L440.06,218.68 L444.84,219.44 L444.80,219.56 L444.76,219.69 L444.72,219.81 L444.68,219.94 L444.64,220.06 L444.60,220.19 L444.56,220.32 L444.53,220.44 L444.49,220.57 L444.46,220.70 L444.43,220.83 L444.39,220.96 L444.36,221.08 L444.33,221.21 L444.31,221.34 L444.28,221.47 L444.25,221.61 L444.23,221.74 L444.21,221.87 L444.18,222.00 L444.16,222.13 L444.14,222.26 L444.13,222.40 L444.11,222.53 L444.09,222.66 L444.08,222.80 L444.07,222.93 L444.05,223.07 L444.04,223.20 L444.03,223.34 L444.02,223.47 L444.02,223.61 L444.01,223.74 L444.01,223.88 L444.00,224.01 L444.00,224.15 L444.00,224.28 L444.00,224.42 L444.00,224.56 L444.01,224.69 L444.01,224.83 L444.02,224.96 L444.02,225.10 L444.03,225.24 L444.04,225.37 L444.05,225.51 L444.06,225.65 L444.08,225.78 L444.09,225.92 L444.11,226.06 L444.12,226.19 L444.14,226.33 L444.16,226.46 L444.18,226.60 L444.21,226.74 L444.23,226.87 L444.26,227.01 L444.28,227.14 L444.31,227.28 L444.34,227.41Z" fill="#f5c300"/><path d="M440.06,218.68 L440.31,217.38 L440.64,216.09 L441.05,214.82 L441.54,213.58 L442.11,212.38 L442.75,211.21 L443.47,210.08 L444.25,209.01 L445.10,207.98 L446.01,207.01 L446.98,206.10 L448.01,205.25 L449.08,204.47 L450.21,203.75 L451.38,203.11 L452.58,202.54 L453.82,202.05 L455.09,201.64 L456.38,201.31 L457.68,201.06 L459.00,200.89 L460.33,200.81 L461.67,200.81 L463.00,200.89 L464.32,201.06 L465.62,201.31 L466.91,201.64 L468.18,202.05 L469.42,202.54 L470.62,203.11 L471.79,203.75 L472.92,204.47 L473.99,205.25 L475.02,206.10 L475.99,207.01 L476.90,207.98 L477.75,209.01 L478.53,210.08 L479.25,211.21 L479.89,212.38 L480.46,213.58 L480.95,214.82 L481.36,216.09 L481.69,217.38 L481.94,218.68 L482.11,220.00 L482.19,221.33 L482.19,222.67 L482.11,224.00 L481.94,225.32 L481.69,226.62 L481.36,227.91 L480.95,229.18 L480.46,230.42 L479.89,231.62 L479.25,232.79 L478.53,233.92 L477.75,234.99 L476.90,236.02 L475.99,236.99 L470.73,231.73 L471.17,230.96 L471.54,230.18 L471.87,229.39 L472.15,228.59 L472.37,227.79 L472.55,227.00 L472.67,226.20 L472.76,225.42 L472.80,224.64 L472.79,223.87 L472.75,223.11 L472.67,222.37 L472.55,221.64 L472.40,220.92 L472.21,220.22 L471.99,219.54 L471.74,218.88 L471.46,218.23 L471.15,217.61 L470.81,217.00 L470.45,216.41 L470.06,215.85 L469.64,215.30 L469.20,214.77 L468.73,214.27 L468.24,213.79 L467.73,213.33 L467.19,212.89 L466.63,212.48 L466.05,212.10 L465.44,211.74 L464.81,211.41 L464.17,211.10 L463.50,210.83 L462.81,210.59 L462.10,210.38 L461.37,210.21 L460.63,210.07 L459.86,209.97 L459.09,209.92 L458.30,209.90 L457.49,209.93 L456.68,210.00 L455.86,210.13 L455.04,210.30 L454.21,210.52 L453.39,210.80 L452.57,211.13 L451.76,211.52 L450.97,211.97 L450.19,212.47 L449.44,213.03 L448.71,213.65 L448.02,214.32 L447.36,215.05 L446.75,215.83 L446.19,216.67 L445.68,217.55 L445.23,218.48 L444.84,219.44Z" fill="#b8c41c"/><line x1="459.12" y1="220.85" x2="478.39" y2="232.66" stroke="#666" stroke-width="1.2"/><path d="M481.63,240.47 L481.73,240.73 L482.80,240.70 L482.80,242.50 L481.73,242.47 L481.63,242.73 L481.51,242.99 L482.29,243.72 L481.02,244.99 L480.29,244.21 L480.03,244.33 L479.77,244.43 L479.80,245.50 L478.00,245.50 L478.03,244.43 L477.77,244.33 L477.51,244.21 L476.78,244.99 L475.51,243.72 L476.29,242.99 L476.17,242.73 L476.07,242.47 L475.00,242.50 L475.00,240.70 L476.07,240.73 L476.17,240.47 L476.29,240.21 L475.51,239.48 L476.78,238.21 L477.51,238.99 L477.77,238.87 L478.03,238.77 L478.00,237.70 L479.80,237.70 L479.77,238.77 L480.03,238.87 L480.29,238.99 L481.02,238.21 L482.29,239.48 L481.51,240.21Z M480.10,241.60 A1.2,1.2 0 1,0 477.70,241.60 A1.2,1.2 0 1,0 480.10,241.60Z" fill="#d4d4d4" fill-rule="evenodd"/><path d="M486.59,237.84 L491.81,237.84 L491.81,238.96 L491.06,238.96 L491.06,241.84 L492.10,243.12 L489.66,243.12 L489.55,245.84 L488.85,245.84 L488.74,243.12 L486.30,243.12 L487.34,241.84 L487.34,238.96 L486.59,238.96Z" fill="#d4d4d4"/><path d="M600.01,236.99 L598.88,235.77 L597.85,234.46 L596.92,233.08 L596.11,231.62 L595.41,230.11 L594.84,228.55 L594.39,226.95 L594.06,225.32 L593.87,223.66 L593.80,222.00 L593.87,220.34 L594.06,218.68 L594.39,217.05 L594.84,215.45 L595.41,213.89 L596.11,212.38 L596.92,210.92 L597.85,209.54 L598.88,208.23 L600.01,207.01 L601.23,205.88 L602.54,204.85 L603.92,203.92 L605.38,203.11 L606.89,202.41 L608.45,201.84 L610.05,201.39 L611.68,201.06 L613.34,200.87 L615.00,200.80 L616.66,200.87 L618.32,201.06 L619.95,201.39 L621.55,201.84 L623.11,202.41 L624.62,203.11 L626.08,203.92 L627.46,204.85 L628.77,205.88 L629.99,207.01 L631.12,208.23 L632.15,209.54 L633.08,210.92 L633.89,212.38 L634.59,213.89 L635.16,215.45 L635.61,217.05 L635.94,218.68 L636.13,220.34 L636.20,222.00 L636.13,223.66 L635.94,225.32 L635.61,226.95 L635.16,228.55 L634.59,230.11 L633.89,231.62 L633.08,233.08 L632.15,234.46 L631.12,235.77 L629.99,236.99 L624.73,231.73 L625.27,230.77 L625.71,229.78 L626.08,228.79 L626.37,227.79 L626.58,226.80 L626.72,225.81 L626.79,224.83 L626.79,223.87 L626.73,222.92 L626.62,222.00 L626.44,221.10 L626.21,220.22 L625.93,219.38 L625.60,218.55 L625.23,217.76 L624.81,217.00 L624.35,216.27 L623.85,215.57 L623.31,214.90 L622.73,214.27 L622.11,213.67 L621.46,213.11 L620.77,212.58 L620.05,212.10 L619.29,211.65 L618.49,211.25 L617.67,210.90 L616.81,210.59 L615.92,210.34 L615.00,210.14 L614.06,210.00 L613.09,209.92 L612.10,209.90 L611.09,209.96 L610.07,210.09 L609.04,210.30 L608.01,210.59 L606.98,210.96 L605.96,211.42 L604.97,211.97 L604.00,212.60 L603.07,213.33 L602.19,214.15 L601.36,215.05 L600.61,216.04 L599.93,217.10 L599.34,218.24 L598.84,219.44 L598.46,220.70 L598.18,222.00 L598.03,223.34 L598.01,224.69 L598.11,226.06 L598.34,227.41 L598.70,228.75 L599.20,230.05 L599.82,231.30 L600.56,232.49 L601.41,233.61 L602.37,234.63Z" fill="#b8c41c"/><line x1="613.44" y1="220.44" x2="629.42" y2="236.42" stroke="#666" stroke-width="1.2"/><path d="M635.63,240.47 L635.73,240.73 L636.80,240.70 L636.80,242.50 L635.73,242.47 L635.63,242.73 L635.51,242.99 L636.29,243.72 L635.02,244.99 L634.29,244.21 L634.03,244.33 L633.77,244.43 L633.80,245.50 L632.00,245.50 L632.03,244.43 L631.77,244.33 L631.51,244.21 L630.78,244.99 L629.51,243.72 L630.29,242.99 L630.17,242.73 L630.07,242.47 L629.00,242.50 L629.00,240.70 L630.07,240.73 L630.17,240.47 L630.29,240.21 L629.51,239.48 L630.78,238.21 L631.51,238.99 L631.77,238.87 L632.03,238.77 L632.00,237.70 L633.80,237.70 L633.77,238.77 L634.03,238.87 L634.29,238.99 L635.02,238.21 L636.29,239.48 L635.51,240.21Z M634.10,241.60 A1.2,1.2 0 1,0 631.70,241.60 A1.2,1.2 0 1,0 634.10,241.60Z" fill="#d4d4d4" fill-rule="evenodd"/><path d="M640.59,237.84 L645.81,237.84 L645.81,238.96 L645.06,238.96 L645.06,241.84 L646.10,243.12 L643.66,243.12 L643.55,245.84 L642.85,245.84 L642.74,243.12 L640.30,243.12 L641.34,241.84 L641.34,238.96 L640.59,238.96Z" fill="#d4d4d4"/><path d="M754.01,236.99 L753.89,236.87 L753.78,236.75 L753.66,236.63 L753.55,236.51 L753.43,236.39 L753.32,236.27 L753.21,236.14 L753.10,236.02 L752.99,235.89 L752.88,235.77 L752.77,235.64 L752.67,235.51 L752.56,235.38 L752.45,235.26 L752.35,235.12 L752.25,234.99 L752.15,234.86 L752.05,234.73 L751.95,234.60 L751.85,234.46 L751.75,234.33 L751.66,234.19 L751.56,234.05 L751.47,233.92 L751.37,233.78 L751.28,233.64 L751.19,233.50 L751.10,233.36 L751.01,233.22 L750.92,233.08 L750.84,232.93 L750.75,232.79 L750.67,232.65 L750.59,232.50 L750.50,232.36 L750.42,232.21 L750.34,232.07 L750.26,231.92 L750.19,231.77 L750.11,231.62 L750.04,231.48 L749.96,231.33 L749.89,231.18 L749.82,231.03 L749.75,230.88 L749.68,230.72 L749.61,230.57 L749.54,230.42 L749.48,230.27 L749.41,230.11 L749.35,229.96 L749.29,229.80 L749.23,229.65 L749.17,229.49 L749.11,229.34 L749.05,229.18 L749.00,229.02 L748.94,228.87 L748.89,228.71 L748.84,228.55 L752.34,227.41 L752.37,227.55 L752.40,227.68 L752.44,227.82 L752.47,227.95 L752.51,228.08 L752.54,228.22 L752.58,228.35 L752.62,228.48 L752.66,228.62 L752.70,228.75 L752.75,228.88 L752.79,229.01 L752.84,229.14 L752.89,229.28 L752.94,229.41 L752.99,229.54 L753.04,229.67 L753.09,229.79 L753.14,229.92 L753.20,230.05 L753.25,230.18 L753.31,230.31 L753.37,230.43 L753.43,230.56 L753.49,230.68 L753.56,230.81 L753.62,230.93 L753.68,231.06 L753.75,231.18 L753.82,231.30 L753.89,231.43 L753.96,231.55 L754.03,231.67 L754.10,231.79 L754.17,231.91 L754.25,232.03 L754.32,232.14 L754.40,232.26 L754.48,232.38 L754.56,232.49 L754.64,232.61 L754.72,232.72 L754.80,232.84 L754.89,232.95 L754.97,233.06 L755.06,233.17 L755.14,233.28 L755.23,233.39 L755.32,233.50 L755.41,233.61 L755.50,233.71 L755.59,233.82 L755.69,233.92 L755.78,234.03 L755.88,234.13 L755.97,234.23 L756.07,234.33 L756.17,234.43 L756.27,234.53 L756.37,234.63Z" fill="#e30814"/><path d="M748.84,228.55 L748.79,228.39 L748.74,228.23 L748.69,228.07 L748.64,227.91 L748.60,227.75 L748.55,227.59 L748.51,227.43 L748.47,227.27 L748.43,227.11 L748.39,226.95 L748.35,226.79 L748.31,226.62 L748.27,226.46 L748.24,226.30 L748.21,226.14 L748.18,225.97 L748.14,225.81 L748.12,225.64 L748.09,225.48 L748.06,225.32 L748.04,225.15 L748.01,224.99 L747.99,224.82 L747.97,224.66 L747.95,224.49 L747.93,224.33 L747.91,224.16 L747.89,224.00 L747.88,223.83 L747.87,223.66 L747.85,223.50 L747.84,223.33 L747.83,223.16 L747.82,223.00 L747.82,222.83 L747.81,222.67 L747.81,222.50 L747.80,222.33 L747.80,222.17 L747.80,222.00 L747.80,221.83 L747.80,221.67 L747.81,221.50 L747.81,221.33 L747.82,221.17 L747.82,221.00 L747.83,220.84 L747.84,220.67 L747.85,220.50 L747.87,220.34 L747.88,220.17 L747.89,220.00 L747.91,219.84 L747.93,219.67 L747.95,219.51 L747.97,219.34 L747.99,219.18 L748.01,219.01 L748.04,218.85 L748.06,218.68 L752.84,219.44 L752.80,219.56 L752.76,219.69 L752.72,219.81 L752.68,219.94 L752.64,220.06 L752.60,220.19 L752.56,220.32 L752.53,220.44 L752.49,220.57 L752.46,220.70 L752.43,220.83 L752.39,220.96 L752.36,221.08 L752.33,221.21 L752.31,221.34 L752.28,221.47 L752.25,221.61 L752.23,221.74 L752.21,221.87 L752.18,222.00 L752.16,222.13 L752.14,222.26 L752.13,222.40 L752.11,222.53 L752.09,222.66 L752.08,222.80 L752.07,222.93 L752.05,223.07 L752.04,223.20 L752.03,223.34 L752.02,223.47 L752.02,223.61 L752.01,223.74 L752.01,223.88 L752.00,224.01 L752.00,224.15 L752.00,224.28 L752.00,224.42 L752.00,224.56 L752.01,224.69 L752.01,224.83 L752.02,224.96 L752.02,225.10 L752.03,225.24 L752.04,225.37 L752.05,225.51 L752.06,225.65 L752.08,225.78 L752.09,225.92 L752.11,226.06 L752.12,226.19 L752.14,226.33 L752.16,226.46 L752.18,226.60 L752.21,226.74 L752.23,226.87 L752.26,227.01 L752.28,227.14 L752.31,227.28 L752.34,227.41Z" fill="#f5c300"/><path d="M748.06,218.68 L748.31,217.38 L748.64,216.09 L749.05,214.82 L749.54,213.58 L750.11,212.38 L750.75,211.21 L751.47,210.08 L752.25,209.01 L753.10,207.98 L754.01,207.01 L754.98,206.10 L756.01,205.25 L757.08,204.47 L758.21,203.75 L759.38,203.11 L760.58,202.54 L761.82,202.05 L763.09,201.64 L764.38,201.31 L765.68,201.06 L767.00,200.89 L768.33,200.81 L769.67,200.81 L771.00,200.89 L772.32,201.06 L773.62,201.31 L774.91,201.64 L776.18,202.05 L777.42,202.54 L778.62,203.11 L779.79,203.75 L780.92,204.47 L781.99,205.25 L783.02,206.10 L783.99,207.01 L784.90,207.98 L785.75,209.01 L786.53,210.08 L787.25,211.21 L787.89,212.38 L788.46,213.58 L788.95,214.82 L789.36,216.09 L789.69,217.38 L789.94,218.68 L790.11,220.00 L790.19,221.33 L790.19,222.67 L790.11,224.00 L789.94,225.32 L789.69,226.62 L789.36,227.91 L788.95,229.18 L788.46,230.42 L787.89,231.62 L787.25,232.79 L786.53,233.92 L785.75,234.99 L784.90,236.02 L783.99,236.99 L778.73,231.73 L779.17,230.96 L779.54,230.18 L779.87,229.39 L780.15,228.59 L780.37,227.79 L780.55,227.00 L780.67,226.20 L780.76,225.42 L780.80,224.64 L780.79,223.87 L780.75,223.11 L780.67,222.37 L780.55,221.64 L780.40,220.92 L780.21,220.22 L779.99,219.54 L779.74,218.88 L779.46,218.23 L779.15,217.61 L778.81,217.00 L778.45,216.41 L778.06,215.85 L777.64,215.30 L777.20,214.77 L776.73,214.27 L776.24,213.79 L775.73,213.33 L775.19,212.89 L774.63,212.48 L774.05,212.10 L773.44,211.74 L772.81,211.41 L772.17,211.10 L771.50,210.83 L770.81,210.59 L770.10,210.38 L769.37,210.21 L768.63,210.07 L767.86,209.97 L767.09,209.92 L766.30,209.90 L765.49,209.93 L764.68,210.00 L763.86,210.13 L763.04,210.30 L762.21,210.52 L761.39,210.80 L760.57,211.13 L759.76,211.52 L758.97,211.97 L758.19,212.47 L757.44,213.03 L756.71,213.65 L756.02,214.32 L755.36,215.05 L754.75,215.83 L754.19,216.67 L753.68,217.55 L753.23,218.48 L752.84,219.44Z" fill="#b8c41c"/><line x1="766.88" y1="221.42" x2="788.68" y2="227.38" stroke="#666" stroke-width="1.2"/><path d="M789.63,240.47 L789.73,240.73 L790.80,240.70 L790.80,242.50 L789.73,242.47 L789.63,242.73 L789.51,242.99 L790.29,243.72 L789.02,244.99 L788.29,244.21 L788.03,244.33 L787.77,244.43 L787.80,245.50 L786.00,245.50 L786.03,244.43 L785.77,244.33 L785.51,244.21 L784.78,244.99 L783.51,243.72 L784.29,242.99 L784.17,242.73 L784.07,242.47 L783.00,242.50 L783.00,240.70 L784.07,240.73 L784.17,240.47 L784.29,240.21 L783.51,239.48 L784.78,238.21 L785.51,238.99 L785.77,238.87 L786.03,238.77 L786.00,237.70 L787.80,237.70 L787.77,238.77 L788.03,238.87 L788.29,238.99 L789.02,238.21 L790.29,239.48 L789.51,240.21Z M788.10,241.60 A1.2,1.2 0 1,0 785.70,241.60 A1.2,1.2 0 1,0 788.10,241.60Z" fill="#d4d4d4" fill-rule="evenodd"/><path d="M794.59,237.84 L799.81,237.84 L799.81,238.96 L799.06,238.96 L799.06,241.84 L800.10,243.12 L797.66,243.12 L797.55,245.84 L796.85,245.84 L796.74,243.12 L794.30,243.12 L795.34,241.84 L795.34,238.96 L794.59,238.96Z" fill="#d4d4d4"/></svg>
<div style="position:absolute;top:113.36px;line-height:19.0px;font-size:9.5px;font-weight:400;color:#555;white-space:nowrap;letter-spacing:0.5px;left:351px;-webkit-text-stroke:0.45px #555;">Available Memory</div>
<div style="position:absolute;top:156.36px;line-height:19.0px;font-size:9.5px;font-weight:400;color:#555;white-space:nowrap;letter-spacing:0.25px;left:351px;-webkit-text-stroke:0.45px #555;">1,64 GB</div>
<div class="ln" style="left:347px;top:175px;width:147px;background:#dcdcdc"></div>
<div style="position:absolute;top:113.36px;line-height:19.0px;font-size:9.5px;font-weight:400;color:#555;white-space:nowrap;letter-spacing:0.5px;left:505px;-webkit-text-stroke:0.45px #555;">Free Physical Memory</div>
<div style="position:absolute;top:156.36px;line-height:19.0px;font-size:9.5px;font-weight:400;color:#555;white-space:nowrap;letter-spacing:0.25px;left:505px;-webkit-text-stroke:0.45px #555;">0,09 GB</div>
<div class="ln" style="left:501px;top:175px;width:147px;background:#dcdcdc"></div>
<div style="position:absolute;top:113.36px;line-height:19.0px;font-size:9.5px;font-weight:400;color:#555;white-space:nowrap;letter-spacing:0.5px;left:659px;-webkit-text-stroke:0.45px #555;">Free Physical Memory %</div>
<div style="position:absolute;top:156.36px;line-height:19.0px;font-size:9.5px;font-weight:400;color:#555;white-space:nowrap;letter-spacing:0.25px;left:659px;-webkit-text-stroke:0.45px #555;">4 %</div>
<div class="ln" style="left:655px;top:175px;width:147px;background:#dcdcdc"></div>
<div style="position:absolute;top:113.36px;line-height:19.0px;font-size:9.5px;font-weight:400;color:#555;white-space:nowrap;letter-spacing:0.5px;left:813px;-webkit-text-stroke:0.45px #555;">Free Swap Space</div>
<div style="position:absolute;top:156.36px;line-height:19.0px;font-size:9.5px;font-weight:400;color:#555;white-space:nowrap;letter-spacing:0.25px;left:813px;-webkit-text-stroke:0.45px #555;">1,90 GB</div>
<div class="ln" style="left:809px;top:175px;width:147px;background:#dcdcdc"></div>
<div style="position:absolute;top:186.36px;line-height:19.0px;font-size:9.5px;font-weight:400;color:#555;white-space:nowrap;letter-spacing:0.5px;left:351px;-webkit-text-stroke:0.45px #555;">Free Swap Space %</div>
<div style="position:absolute;top:229.36px;line-height:19.0px;font-size:9.5px;font-weight:400;color:#555;white-space:nowrap;letter-spacing:0.25px;left:351px;-webkit-text-stroke:0.45px #555;">95 %</div>
<div class="ln" style="left:347px;top:248px;width:147px;background:#dcdcdc"></div>
<div style="position:absolute;top:186.36px;line-height:19.0px;font-size:9.5px;font-weight:400;color:#555;white-space:nowrap;letter-spacing:0.5px;left:505px;-webkit-text-stroke:0.45px #555;">Free Total</div>
<div style="position:absolute;top:229.36px;line-height:19.0px;font-size:9.5px;font-weight:400;color:#555;white-space:nowrap;letter-spacing:0.25px;left:505px;-webkit-text-stroke:0.45px #555;">3,54 GB</div>
<div class="ln" style="left:501px;top:248px;width:147px;background:#dcdcdc"></div>
<div style="position:absolute;top:186.36px;line-height:19.0px;font-size:9.5px;font-weight:400;color:#555;white-space:nowrap;letter-spacing:0.5px;left:659px;-webkit-text-stroke:0.45px #555;">Free Total %</div>
<div style="position:absolute;top:229.36px;line-height:19.0px;font-size:9.5px;font-weight:400;color:#555;white-space:nowrap;letter-spacing:0.25px;left:659px;-webkit-text-stroke:0.45px #555;">89 %</div>
<div class="ln" style="left:655px;top:248px;width:147px;background:#dcdcdc"></div>
<div class="p" style="left:34px;top:344px;width:934px;height:400px"></div>
<div style="position:absolute;top:383.70px;line-height:26px;font-size:13px;font-weight:400;color:#0f1535;white-space:nowrap;letter-spacing:0.1px;left:64px;-webkit-text-stroke:0.6px #0f1535;">Channel</div>
<div style="position:absolute;top:383.70px;line-height:26px;font-size:13px;font-weight:400;color:#0f1535;white-space:nowrap;letter-spacing:-0.5px;left:255.5px;-webkit-text-stroke:0.6px #0f1535;">ID</div>
<div style="position:absolute;top:383.70px;line-height:26px;font-size:13px;font-weight:400;color:#0f1535;white-space:nowrap;left:323.5px;-webkit-text-stroke:0.6px #0f1535;">Last Value</div>
<div style="position:absolute;top:383.70px;line-height:26px;font-size:13px;font-weight:400;color:#0f1535;white-space:nowrap;letter-spacing:0.45px;left:519px;-webkit-text-stroke:0.6px #0f1535;">Minimum</div>
<div style="position:absolute;top:383.70px;line-height:26px;font-size:13px;font-weight:400;color:#0f1535;white-space:nowrap;letter-spacing:0.45px;left:734px;-webkit-text-stroke:0.6px #0f1535;">Maximum</div>
<div class="ln" style="left:54px;top:407px;width:894px;background:#e6e6e6"></div>
<div style="position:absolute;top:416.70px;line-height:26px;font-size:13px;font-weight:400;color:#555;white-space:nowrap;left:64px;">Available Memory</div>
<div style="position:absolute;top:416.70px;line-height:26px;font-size:13px;font-weight:400;color:#555;white-space:nowrap;right:692.7px;text-align:right;">1</div>
<div style="position:absolute;top:416.70px;line-height:26px;font-size:13px;font-weight:400;color:#555;white-space:nowrap;right:571px;text-align:right;transform:scaleX(0.95);transform-origin:100% 0;">1,64 GB</div>
<div style="position:absolute;top:416.70px;line-height:26px;font-size:13px;font-weight:400;color:#555;white-space:nowrap;right:385px;text-align:right;transform:scaleX(0.95);transform-origin:100% 0;">1,64 GB</div>
<div style="position:absolute;top:416.70px;line-height:26px;font-size:13px;font-weight:400;color:#555;white-space:nowrap;right:167px;text-align:right;transform:scaleX(0.95);transform-origin:100% 0;">1,64 GB</div>
<div class="ln" style="left:54px;top:440px;width:894px;background:#e6e6e6"></div>
<div style="position:absolute;top:449.70px;line-height:26px;font-size:13px;font-weight:400;color:#555;white-space:nowrap;left:64px;">Available Memory %</div>
<div style="position:absolute;top:449.70px;line-height:26px;font-size:13px;font-weight:400;color:#555;white-space:nowrap;right:692.7px;text-align:right;">0</div>
<div style="position:absolute;top:449.70px;line-height:26px;font-size:13px;font-weight:400;color:#555;white-space:nowrap;right:571px;text-align:right;transform:scaleX(0.95);transform-origin:100% 0;">84 %</div>
<div style="position:absolute;top:449.70px;line-height:26px;font-size:13px;font-weight:400;color:#555;white-space:nowrap;right:385px;text-align:right;transform:scaleX(0.95);transform-origin:100% 0;">84 %</div>
<div style="position:absolute;top:449.70px;line-height:26px;font-size:13px;font-weight:400;color:#555;white-space:nowrap;right:167px;text-align:right;transform:scaleX(0.95);transform-origin:100% 0;">84 %</div>
<div class="ln" style="left:54px;top:473px;width:894px;background:#e6e6e6"></div>
<div style="position:absolute;top:482.70px;line-height:26px;font-size:13px;font-weight:400;color:#555;white-space:nowrap;left:64px;">Downtime</div>
<div style="position:absolute;top:482.70px;line-height:26px;font-size:13px;font-weight:400;color:#555;white-space:nowrap;right:692.7px;text-align:right;">-4</div>
<div class="ln" style="left:54px;top:506px;width:894px;background:#e6e6e6"></div>
<div style="position:absolute;top:515.70px;line-height:26px;font-size:13px;font-weight:400;color:#555;white-space:nowrap;left:64px;">Free Physical Memory</div>
<div style="position:absolute;top:515.70px;line-height:26px;font-size:13px;font-weight:400;color:#555;white-space:nowrap;right:692.7px;text-align:right;">3</div>
<div style="position:absolute;top:515.70px;line-height:26px;font-size:13px;font-weight:400;color:#555;white-space:nowrap;right:571px;text-align:right;transform:scaleX(0.95);transform-origin:100% 0;">0,09 GB</div>
<div style="position:absolute;top:515.70px;line-height:26px;font-size:13px;font-weight:400;color:#555;white-space:nowrap;right:385px;text-align:right;transform:scaleX(0.95);transform-origin:100% 0;">0,09 GB</div>
<div style="position:absolute;top:515.70px;line-height:26px;font-size:13px;font-weight:400;color:#555;white-space:nowrap;right:167px;text-align:right;transform:scaleX(0.95);transform-origin:100% 0;">0,09 GB</div>
<div class="ln" style="left:54px;top:539px;width:894px;background:#e6e6e6"></div>
<div style="position:absolute;top:548.70px;line-height:26px;font-size:13px;font-weight:400;color:#555;white-space:nowrap;left:64px;">Free Physical Memory %</div>
<div style="position:absolute;top:548.70px;line-height:26px;font-size:13px;font-weight:400;color:#555;white-space:nowrap;right:692.7px;text-align:right;">2</div>
<div style="position:absolute;top:548.70px;line-height:26px;font-size:13px;font-weight:400;color:#555;white-space:nowrap;right:571px;text-align:right;transform:scaleX(0.95);transform-origin:100% 0;">4 %</div>
<div style="position:absolute;top:548.70px;line-height:26px;font-size:13px;font-weight:400;color:#555;white-space:nowrap;right:385px;text-align:right;transform:scaleX(0.95);transform-origin:100% 0;">4 %</div>
<div style="position:absolute;top:548.70px;line-height:26px;font-size:13px;font-weight:400;color:#555;white-space:nowrap;right:167px;text-align:right;transform:scaleX(0.95);transform-origin:100% 0;">4 %</div>
<div class="ln" style="left:54px;top:572px;width:894px;background:#e6e6e6"></div>
<div style="position:absolute;top:581.70px;line-height:26px;font-size:13px;font-weight:400;color:#555;white-space:nowrap;left:64px;">Free Swap Space</div>
<div style="position:absolute;top:581.70px;line-height:26px;font-size:13px;font-weight:400;color:#555;white-space:nowrap;right:692.7px;text-align:right;">5</div>
<div style="position:absolute;top:581.70px;line-height:26px;font-size:13px;font-weight:400;color:#555;white-space:nowrap;right:571px;text-align:right;transform:scaleX(0.95);transform-origin:100% 0;">1,90 GB</div>
<div style="position:absolute;top:581.70px;line-height:26px;font-size:13px;font-weight:400;color:#555;white-space:nowrap;right:385px;text-align:right;transform:scaleX(0.95);transform-origin:100% 0;">1,90 GB</div>
<div style="position:absolute;top:581.70px;line-height:26px;font-size:13px;font-weight:400;color:#555;white-space:nowrap;right:167px;text-align:right;transform:scaleX(0.95);transform-origin:100% 0;">1,90 GB</div>
<div class="ln" style="left:54px;top:605px;width:894px;background:#e6e6e6"></div>
<div style="position:absolute;top:614.70px;line-height:26px;font-size:13px;font-weight:400;color:#555;white-space:nowrap;left:64px;">Free Swap Space %</div>
<div style="position:absolute;top:614.70px;line-height:26px;font-size:13px;font-weight:400;color:#555;white-space:nowrap;right:692.7px;text-align:right;">4</div>
<div style="position:absolute;top:614.70px;line-height:26px;font-size:13px;font-weight:400;color:#555;white-space:nowrap;right:571px;text-align:right;transform:scaleX(0.95);transform-origin:100% 0;">95 %</div>
<div style="position:absolute;top:614.70px;line-height:26px;font-size:13px;font-weight:400;color:#555;white-space:nowrap;right:385px;text-align:right;transform:scaleX(0.95);transform-origin:100% 0;">95 %</div>
<div style="position:absolute;top:614.70px;line-height:26px;font-size:13px;font-weight:400;color:#555;white-space:nowrap;right:167px;text-align:right;transform:scaleX(0.95);transform-origin:100% 0;">95 %</div>
<div class="ln" style="left:54px;top:638px;width:894px;background:#e6e6e6"></div>
<div style="position:absolute;top:647.70px;line-height:26px;font-size:13px;font-weight:400;color:#555;white-space:nowrap;left:64px;">Free Total</div>
<div style="position:absolute;top:647.70px;line-height:26px;font-size:13px;font-weight:400;color:#555;white-space:nowrap;right:692.7px;text-align:right;">7</div>
<div style="position:absolute;top:647.70px;line-height:26px;font-size:13px;font-weight:400;color:#555;white-space:nowrap;right:571px;text-align:right;transform:scaleX(0.95);transform-origin:100% 0;">3,54 GB</div>
<div style="position:absolute;top:647.70px;line-height:26px;font-size:13px;font-weight:400;color:#555;white-space:nowrap;right:385px;text-align:right;transform:scaleX(0.95);transform-origin:100% 0;">3,54 GB</div>
<div style="position:absolute;top:647.70px;line-height:26px;font-size:13px;font-weight:400;color:#555;white-space:nowrap;right:167px;text-align:right;transform:scaleX(0.95);transform-origin:100% 0;">3,54 GB</div>
<div class="ln" style="left:54px;top:671px;width:894px;background:#e6e6e6"></div>
<div style="position:absolute;top:680.70px;line-height:26px;font-size:13px;font-weight:400;color:#555;white-space:nowrap;left:64px;">Free Total %</div>
<div style="position:absolute;top:680.70px;line-height:26px;font-size:13px;font-weight:400;color:#555;white-space:nowrap;right:692.7px;text-align:right;">6</div>
<div style="position:absolute;top:680.70px;line-height:26px;font-size:13px;font-weight:400;color:#555;white-space:nowrap;right:571px;text-align:right;transform:scaleX(0.95);transform-origin:100% 0;">89 %</div>
<div style="position:absolute;top:680.70px;line-height:26px;font-size:13px;font-weight:400;color:#555;white-space:nowrap;right:385px;text-align:right;transform:scaleX(0.95);transform-origin:100% 0;">89 %</div>
<div style="position:absolute;top:680.70px;line-height:26px;font-size:13px;font-weight:400;color:#555;white-space:nowrap;right:167px;text-align:right;transform:scaleX(0.95);transform-origin:100% 0;">89 %</div>
<div class="ln" style="left:54px;top:704px;width:894px;background:#e6e6e6"></div>
<svg style="position:absolute;left:0;top:0" width="976" height="713"><path d="M117.3,395.3 L125,395.3 L121.15,399.7Z" fill="#0f1535"/><path d="M273.2,393.9 L277.0,389.4 L280.8,393.9Z" fill="#ccc"/><path d="M273.2,395.4 L277.0,399.9 L280.8,395.4Z" fill="#ccc"/><path d="M390,393.9 L393.8,389.4 L397.6,393.9Z" fill="#ccc"/><path d="M390,395.4 L393.8,399.9 L397.6,395.4Z" fill="#ccc"/><path d="M580.5,393.9 L584.3,389.4 L588.1,393.9Z" fill="#ccc"/><path d="M580.5,395.4 L584.3,399.9 L588.1,395.4Z" fill="#ccc"/><path d="M798,393.9 L801.8,389.4 L805.6,393.9Z" fill="#ccc"/><path d="M798,395.4 L801.8,399.9 L805.6,395.4Z" fill="#ccc"/><path d="M887.71,424.29 L887.80,424.62 L888.65,424.85 L888.65,426.15 L887.80,426.38 L887.71,426.71 L887.59,427.02 L888.15,427.71 L887.38,428.76 L886.56,428.44 L886.29,428.66 L886.01,428.84 L886.06,429.72 L884.82,430.13 L884.34,429.39 L884.00,429.40 L883.66,429.39 L883.18,430.13 L881.94,429.72 L881.99,428.84 L881.71,428.66 L881.44,428.44 L880.62,428.76 L879.85,427.71 L880.41,427.02 L880.29,426.71 L880.20,426.38 L879.35,426.15 L879.35,424.85 L880.20,424.62 L880.29,424.29 L880.41,423.98 L879.85,423.29 L880.62,422.24 L881.44,422.56 L881.71,422.34 L881.99,422.16 L881.94,421.28 L883.18,420.87 L883.66,421.61 L884.00,421.60 L884.34,421.61 L884.82,420.87 L886.06,421.28 L886.01,422.16 L886.29,422.34 L886.56,422.56 L887.38,422.24 L888.15,423.29 L887.59,423.98Z M886.00,425.50 A2.0,2.0 0 1,0 882.00,425.50 A2.0,2.0 0 1,0 886.00,425.50Z" fill="#444" fill-rule="evenodd"/><path d="M880.32,430.42 L880.41,430.67 L881.15,430.78 L881.15,431.82 L880.41,431.93 L880.32,432.18 L880.21,432.42 L880.66,433.02 L879.92,433.76 L879.32,433.31 L879.08,433.42 L878.83,433.51 L878.72,434.25 L877.68,434.25 L877.57,433.51 L877.32,433.42 L877.08,433.31 L876.48,433.76 L875.74,433.02 L876.19,432.42 L876.08,432.18 L875.99,431.93 L875.25,431.82 L875.25,430.78 L875.99,430.67 L876.08,430.42 L876.19,430.18 L875.74,429.58 L876.48,428.84 L877.08,429.29 L877.32,429.18 L877.57,429.09 L877.68,428.35 L878.72,428.35 L878.83,429.09 L879.08,429.18 L879.32,429.29 L879.92,428.84 L880.66,429.58 L880.21,430.18Z M879.10,431.30 A0.9,0.9 0 1,0 877.30,431.30 A0.9,0.9 0 1,0 879.10,431.30Z" fill="#444" fill-rule="evenodd"/><path d="M887.71,457.29 L887.80,457.62 L888.65,457.85 L888.65,459.15 L887.80,459.38 L887.71,459.71 L887.59,460.02 L888.15,460.71 L887.38,461.76 L886.56,461.44 L886.29,461.66 L886.01,461.84 L886.06,462.72 L884.82,463.13 L884.34,462.39 L884.00,462.40 L883.66,462.39 L883.18,463.13 L881.94,462.72 L881.99,461.84 L881.71,461.66 L881.44,461.44 L880.62,461.76 L879.85,460.71 L880.41,460.02 L880.29,459.71 L880.20,459.38 L879.35,459.15 L879.35,457.85 L880.20,457.62 L880.29,457.29 L880.41,456.98 L879.85,456.29 L880.62,455.24 L881.44,455.56 L881.71,455.34 L881.99,455.16 L881.94,454.28 L883.18,453.87 L883.66,454.61 L884.00,454.60 L884.34,454.61 L884.82,453.87 L886.06,454.28 L886.01,455.16 L886.29,455.34 L886.56,455.56 L887.38,455.24 L888.15,456.29 L887.59,456.98Z M886.00,458.50 A2.0,2.0 0 1,0 882.00,458.50 A2.0,2.0 0 1,0 886.00,458.50Z" fill="#444" fill-rule="evenodd"/><path d="M880.32,463.42 L880.41,463.67 L881.15,463.78 L881.15,464.82 L880.41,464.93 L880.32,465.18 L880.21,465.42 L880.66,466.02 L879.92,466.76 L879.32,466.31 L879.08,466.42 L878.83,466.51 L878.72,467.25 L877.68,467.25 L877.57,466.51 L877.32,466.42 L877.08,466.31 L876.48,466.76 L875.74,466.02 L876.19,465.42 L876.08,465.18 L875.99,464.93 L875.25,464.82 L875.25,463.78 L875.99,463.67 L876.08,463.42 L876.19,463.18 L875.74,462.58 L876.48,461.84 L877.08,462.29 L877.32,462.18 L877.57,462.09 L877.68,461.35 L878.72,461.35 L878.83,462.09 L879.08,462.18 L879.32,462.29 L879.92,461.84 L880.66,462.58 L880.21,463.18Z M879.10,464.30 A0.9,0.9 0 1,0 877.30,464.30 A0.9,0.9 0 1,0 879.10,464.30Z" fill="#444" fill-rule="evenodd"/><path d="M887.71,490.29 L887.80,490.62 L888.65,490.85 L888.65,492.15 L887.80,492.38 L887.71,492.71 L887.59,493.02 L888.15,493.71 L887.38,494.76 L886.56,494.44 L886.29,494.66 L886.01,494.84 L886.06,495.72 L884.82,496.13 L884.34,495.39 L884.00,495.40 L883.66,495.39 L883.18,496.13 L881.94,495.72 L881.99,494.84 L881.71,494.66 L881.44,494.44 L880.62,494.76 L879.85,493.71 L880.41,493.02 L880.29,492.71 L880.20,492.38 L879.35,492.15 L879.35,490.85 L880.20,490.62 L880.29,490.29 L880.41,489.98 L879.85,489.29 L880.62,488.24 L881.44,488.56 L881.71,488.34 L881.99,488.16 L881.94,487.28 L883.18,486.87 L883.66,487.61 L884.00,487.60 L884.34,487.61 L884.82,486.87 L886.06,487.28 L886.01,488.16 L886.29,488.34 L886.56,488.56 L887.38,488.24 L888.15,489.29 L887.59,489.98Z M886.00,491.50 A2.0,2.0 0 1,0 882.00,491.50 A2.0,2.0 0 1,0 886.00,491.50Z" fill="#444" fill-rule="evenodd"/><path d="M880.32,496.42 L880.41,496.67 L881.15,496.78 L881.15,497.82 L880.41,497.93 L880.32,498.18 L880.21,498.42 L880.66,499.02 L879.92,499.76 L879.32,499.31 L879.08,499.42 L878.83,499.51 L878.72,500.25 L877.68,500.25 L877.57,499.51 L877.32,499.42 L877.08,499.31 L876.48,499.76 L875.74,499.02 L876.19,498.42 L876.08,498.18 L875.99,497.93 L875.25,497.82 L875.25,496.78 L875.99,496.67 L876.08,496.42 L876.19,496.18 L875.74,495.58 L876.48,494.84 L877.08,495.29 L877.32,495.18 L877.57,495.09 L877.68,494.35 L878.72,494.35 L878.83,495.09 L879.08,495.18 L879.32,495.29 L879.92,494.84 L880.66,495.58 L880.21,496.18Z M879.10,497.30 A0.9,0.9 0 1,0 877.30,497.30 A0.9,0.9 0 1,0 879.10,497.30Z" fill="#444" fill-rule="evenodd"/><path d="M887.71,523.29 L887.80,523.62 L888.65,523.85 L888.65,525.15 L887.80,525.38 L887.71,525.71 L887.59,526.02 L888.15,526.71 L887.38,527.76 L886.56,527.44 L886.29,527.66 L886.01,527.84 L886.06,528.72 L884.82,529.13 L884.34,528.39 L884.00,528.40 L883.66,528.39 L883.18,529.13 L881.94,528.72 L881.99,527.84 L881.71,527.66 L881.44,527.44 L880.62,527.76 L879.85,526.71 L880.41,526.02 L880.29,525.71 L880.20,525.38 L879.35,525.15 L879.35,523.85 L880.20,523.62 L880.29,523.29 L880.41,522.98 L879.85,522.29 L880.62,521.24 L881.44,521.56 L881.71,521.34 L881.99,521.16 L881.94,520.28 L883.18,519.87 L883.66,520.61 L884.00,520.60 L884.34,520.61 L884.82,519.87 L886.06,520.28 L886.01,521.16 L886.29,521.34 L886.56,521.56 L887.38,521.24 L888.15,522.29 L887.59,522.98Z M886.00,524.50 A2.0,2.0 0 1,0 882.00,524.50 A2.0,2.0 0 1,0 886.00,524.50Z" fill="#444" fill-rule="evenodd"/><path d="M880.32,529.42 L880.41,529.67 L881.15,529.78 L881.15,530.82 L880.41,530.93 L880.32,531.18 L880.21,531.42 L880.66,532.02 L879.92,532.76 L879.32,532.31 L879.08,532.42 L878.83,532.51 L878.72,533.25 L877.68,533.25 L877.57,532.51 L877.32,532.42 L877.08,532.31 L876.48,532.76 L875.74,532.02 L876.19,531.42 L876.08,531.18 L875.99,530.93 L875.25,530.82 L875.25,529.78 L875.99,529.67 L876.08,529.42 L876.19,529.18 L875.74,528.58 L876.48,527.84 L877.08,528.29 L877.32,528.18 L877.57,528.09 L877.68,527.35 L878.72,527.35 L878.83,528.09 L879.08,528.18 L879.32,528.29 L879.92,527.84 L880.66,528.58 L880.21,529.18Z M879.10,530.30 A0.9,0.9 0 1,0 877.30,530.30 A0.9,0.9 0 1,0 879.10,530.30Z" fill="#444" fill-rule="evenodd"/><path d="M887.71,556.29 L887.80,556.62 L888.65,556.85 L888.65,558.15 L887.80,558.38 L887.71,558.71 L887.59,559.02 L888.15,559.71 L887.38,560.76 L886.56,560.44 L886.29,560.66 L886.01,560.84 L886.06,561.72 L884.82,562.13 L884.34,561.39 L884.00,561.40 L883.66,561.39 L883.18,562.13 L881.94,561.72 L881.99,560.84 L881.71,560.66 L881.44,560.44 L880.62,560.76 L879.85,559.71 L880.41,559.02 L880.29,558.71 L880.20,558.38 L879.35,558.15 L879.35,556.85 L880.20,556.62 L880.29,556.29 L880.41,555.98 L879.85,555.29 L880.62,554.24 L881.44,554.56 L881.71,554.34 L881.99,554.16 L881.94,553.28 L883.18,552.87 L883.66,553.61 L884.00,553.60 L884.34,553.61 L884.82,552.87 L886.06,553.28 L886.01,554.16 L886.29,554.34 L886.56,554.56 L887.38,554.24 L888.15,555.29 L887.59,555.98Z M886.00,557.50 A2.0,2.0 0 1,0 882.00,557.50 A2.0,2.0 0 1,0 886.00,557.50Z" fill="#444" fill-rule="evenodd"/><path d="M880.32,562.42 L880.41,562.67 L881.15,562.78 L881.15,563.82 L880.41,563.93 L880.32,564.18 L880.21,564.42 L880.66,565.02 L879.92,565.76 L879.32,565.31 L879.08,565.42 L878.83,565.51 L878.72,566.25 L877.68,566.25 L877.57,565.51 L877.32,565.42 L877.08,565.31 L876.48,565.76 L875.74,565.02 L876.19,564.42 L876.08,564.18 L875.99,563.93 L875.25,563.82 L875.25,562.78 L875.99,562.67 L876.08,562.42 L876.19,562.18 L875.74,561.58 L876.48,560.84 L877.08,561.29 L877.32,561.18 L877.57,561.09 L877.68,560.35 L878.72,560.35 L878.83,561.09 L879.08,561.18 L879.32,561.29 L879.92,560.84 L880.66,561.58 L880.21,562.18Z M879.10,563.30 A0.9,0.9 0 1,0 877.30,563.30 A0.9,0.9 0 1,0 879.10,563.30Z" fill="#444" fill-rule="evenodd"/><path d="M887.71,589.29 L887.80,589.62 L888.65,589.85 L888.65,591.15 L887.80,591.38 L887.71,591.71 L887.59,592.02 L888.15,592.71 L887.38,593.76 L886.56,593.44 L886.29,593.66 L886.01,593.84 L886.06,594.72 L884.82,595.13 L884.34,594.39 L884.00,594.40 L883.66,594.39 L883.18,595.13 L881.94,594.72 L881.99,593.84 L881.71,593.66 L881.44,593.44 L880.62,593.76 L879.85,592.71 L880.41,592.02 L880.29,591.71 L880.20,591.38 L879.35,591.15 L879.35,589.85 L880.20,589.62 L880.29,589.29 L880.41,588.98 L879.85,588.29 L880.62,587.24 L881.44,587.56 L881.71,587.34 L881.99,587.16 L881.94,586.28 L883.18,585.87 L883.66,586.61 L884.00,586.60 L884.34,586.61 L884.82,585.87 L886.06,586.28 L886.01,587.16 L886.29,587.34 L886.56,587.56 L887.38,587.24 L888.15,588.29 L887.59,588.98Z M886.00,590.50 A2.0,2.0 0 1,0 882.00,590.50 A2.0,2.0 0 1,0 886.00,590.50Z" fill="#444" fill-rule="evenodd"/><path d="M880.32,595.42 L880.41,595.67 L881.15,595.78 L881.15,596.82 L880.41,596.93 L880.32,597.18 L880.21,597.42 L880.66,598.02 L879.92,598.76 L879.32,598.31 L879.08,598.42 L878.83,598.51 L878.72,599.25 L877.68,599.25 L877.57,598.51 L877.32,598.42 L877.08,598.31 L876.48,598.76 L875.74,598.02 L876.19,597.42 L876.08,597.18 L875.99,596.93 L875.25,596.82 L875.25,595.78 L875.99,595.67 L876.08,595.42 L876.19,595.18 L875.74,594.58 L876.48,593.84 L877.08,594.29 L877.32,594.18 L877.57,594.09 L877.68,593.35 L878.72,593.35 L878.83,594.09 L879.08,594.18 L879.32,594.29 L879.92,593.84 L880.66,594.58 L880.21,595.18Z M879.10,596.30 A0.9,0.9 0 1,0 877.30,596.30 A0.9,0.9 0 1,0 879.10,596.30Z" fill="#444" fill-rule="evenodd"/><path d="M887.71,622.29 L887.80,622.62 L888.65,622.85 L888.65,624.15 L887.80,624.38 L887.71,624.71 L887.59,625.02 L888.15,625.71 L887.38,626.76 L886.56,626.44 L886.29,626.66 L886.01,626.84 L886.06,627.72 L884.82,628.13 L884.34,627.39 L884.00,627.40 L883.66,627.39 L883.18,628.13 L881.94,627.72 L881.99,626.84 L881.71,626.66 L881.44,626.44 L880.62,626.76 L879.85,625.71 L880.41,625.02 L880.29,624.71 L880.20,624.38 L879.35,624.15 L879.35,622.85 L880.20,622.62 L880.29,622.29 L880.41,621.98 L879.85,621.29 L880.62,620.24 L881.44,620.56 L881.71,620.34 L881.99,620.16 L881.94,619.28 L883.18,618.87 L883.66,619.61 L884.00,619.60 L884.34,619.61 L884.82,618.87 L886.06,619.28 L886.01,620.16 L886.29,620.34 L886.56,620.56 L887.38,620.24 L888.15,621.29 L887.59,621.98Z M886.00,623.50 A2.0,2.0 0 1,0 882.00,623.50 A2.0,2.0 0 1,0 886.00,623.50Z" fill="#444" fill-rule="evenodd"/><path d="M880.32,628.42 L880.41,628.67 L881.15,628.78 L881.15,629.82 L880.41,629.93 L880.32,630.18 L880.21,630.42 L880.66,631.02 L879.92,631.76 L879.32,631.31 L879.08,631.42 L878.83,631.51 L878.72,632.25 L877.68,632.25 L877.57,631.51 L877.32,631.42 L877.08,631.31 L876.48,631.76 L875.74,631.02 L876.19,630.42 L876.08,630.18 L875.99,629.93 L875.25,629.82 L875.25,628.78 L875.99,628.67 L876.08,628.42 L876.19,628.18 L875.74,627.58 L876.48,626.84 L877.08,627.29 L877.32,627.18 L877.57,627.09 L877.68,626.35 L878.72,626.35 L878.83,627.09 L879.08,627.18 L879.32,627.29 L879.92,626.84 L880.66,627.58 L880.21,628.18Z M879.10,629.30 A0.9,0.9 0 1,0 877.30,629.30 A0.9,0.9 0 1,0 879.10,629.30Z" fill="#444" fill-rule="evenodd"/><path d="M887.71,655.29 L887.80,655.62 L888.65,655.85 L888.65,657.15 L887.80,657.38 L887.71,657.71 L887.59,658.02 L888.15,658.71 L887.38,659.76 L886.56,659.44 L886.29,659.66 L886.01,659.84 L886.06,660.72 L884.82,661.13 L884.34,660.39 L884.00,660.40 L883.66,660.39 L883.18,661.13 L881.94,660.72 L881.99,659.84 L881.71,659.66 L881.44,659.44 L880.62,659.76 L879.85,658.71 L880.41,658.02 L880.29,657.71 L880.20,657.38 L879.35,657.15 L879.35,655.85 L880.20,655.62 L880.29,655.29 L880.41,654.98 L879.85,654.29 L880.62,653.24 L881.44,653.56 L881.71,653.34 L881.99,653.16 L881.94,652.28 L883.18,651.87 L883.66,652.61 L884.00,652.60 L884.34,652.61 L884.82,651.87 L886.06,652.28 L886.01,653.16 L886.29,653.34 L886.56,653.56 L887.38,653.24 L888.15,654.29 L887.59,654.98Z M886.00,656.50 A2.0,2.0 0 1,0 882.00,656.50 A2.0,2.0 0 1,0 886.00,656.50Z" fill="#444" fill-rule="evenodd"/><path d="M880.32,661.42 L880.41,661.67 L881.15,661.78 L881.15,662.82 L880.41,662.93 L880.32,663.18 L880.21,663.42 L880.66,664.02 L879.92,664.76 L879.32,664.31 L879.08,664.42 L878.83,664.51 L878.72,665.25 L877.68,665.25 L877.57,664.51 L877.32,664.42 L877.08,664.31 L876.48,664.76 L875.74,664.02 L876.19,663.42 L876.08,663.18 L875.99,662.93 L875.25,662.82 L875.25,661.78 L875.99,661.67 L876.08,661.42 L876.19,661.18 L875.74,660.58 L876.48,659.84 L877.08,660.29 L877.32,660.18 L877.57,660.09 L877.68,659.35 L878.72,659.35 L878.83,660.09 L879.08,660.18 L879.32,660.29 L879.92,659.84 L880.66,660.58 L880.21,661.18Z M879.10,662.30 A0.9,0.9 0 1,0 877.30,662.30 A0.9,0.9 0 1,0 879.10,662.30Z" fill="#444" fill-rule="evenodd"/><path d="M887.71,688.29 L887.80,688.62 L888.65,688.85 L888.65,690.15 L887.80,690.38 L887.71,690.71 L887.59,691.02 L888.15,691.71 L887.38,692.76 L886.56,692.44 L886.29,692.66 L886.01,692.84 L886.06,693.72 L884.82,694.13 L884.34,693.39 L884.00,693.40 L883.66,693.39 L883.18,694.13 L881.94,693.72 L881.99,692.84 L881.71,692.66 L881.44,692.44 L880.62,692.76 L879.85,691.71 L880.41,691.02 L880.29,690.71 L880.20,690.38 L879.35,690.15 L879.35,688.85 L880.20,688.62 L880.29,688.29 L880.41,687.98 L879.85,687.29 L880.62,686.24 L881.44,686.56 L881.71,686.34 L881.99,686.16 L881.94,685.28 L883.18,684.87 L883.66,685.61 L884.00,685.60 L884.34,685.61 L884.82,684.87 L886.06,685.28 L886.01,686.16 L886.29,686.34 L886.56,686.56 L887.38,686.24 L888.15,687.29 L887.59,687.98Z M886.00,689.50 A2.0,2.0 0 1,0 882.00,689.50 A2.0,2.0 0 1,0 886.00,689.50Z" fill="#444" fill-rule="evenodd"/><path d="M880.32,694.42 L880.41,694.67 L881.15,694.78 L881.15,695.82 L880.41,695.93 L880.32,696.18 L880.21,696.42 L880.66,697.02 L879.92,697.76 L879.32,697.31 L879.08,697.42 L878.83,697.51 L878.72,698.25 L877.68,698.25 L877.57,697.51 L877.32,697.42 L877.08,697.31 L876.48,697.76 L875.74,697.02 L876.19,696.42 L876.08,696.18 L875.99,695.93 L875.25,695.82 L875.25,694.78 L875.99,694.67 L876.08,694.42 L876.19,694.18 L875.74,693.58 L876.48,692.84 L877.08,693.29 L877.32,693.18 L877.57,693.09 L877.68,692.35 L878.72,692.35 L878.83,693.09 L879.08,693.18 L879.32,693.29 L879.92,692.84 L880.66,693.58 L880.21,694.18Z M879.10,695.30 A0.9,0.9 0 1,0 877.30,695.30 A0.9,0.9 0 1,0 879.10,695.30Z" fill="#444" fill-rule="evenodd"/></svg>
</body></html>
